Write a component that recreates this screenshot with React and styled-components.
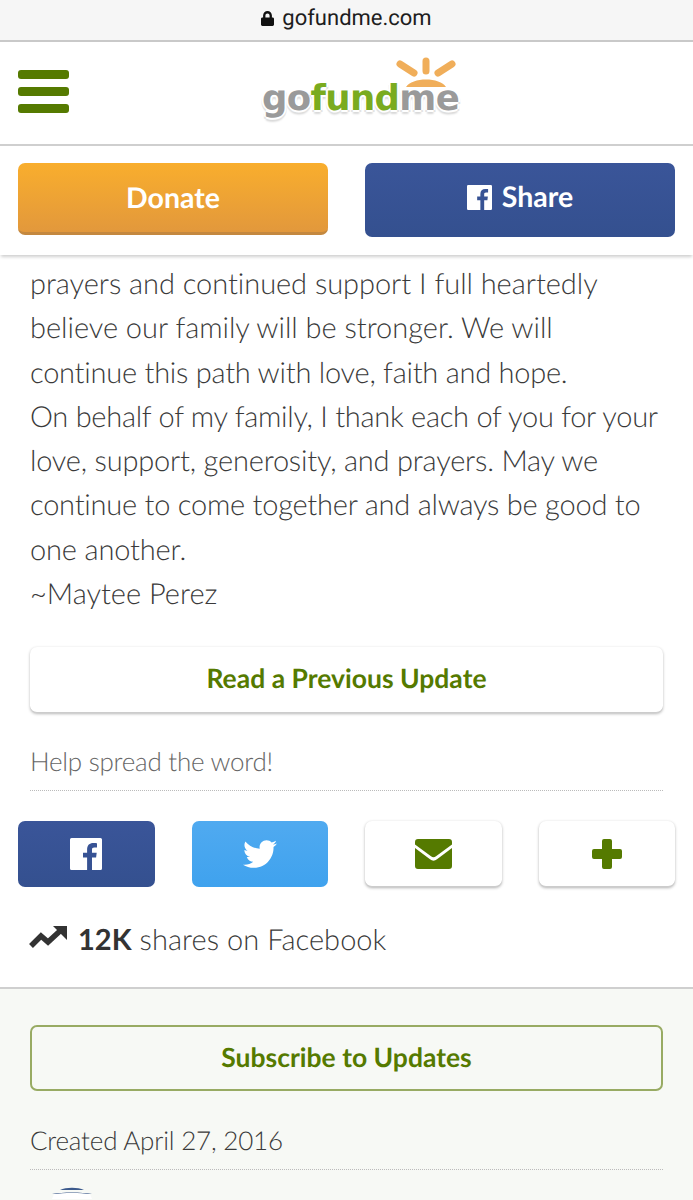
import React from "react";
import styled, { createGlobalStyle } from "styled-components";
import { FaTwitter, FaLock } from "react-icons/fa";

const Global = createGlobalStyle`
  html, body { margin: 0; padding: 0; background: #fff; }
  body { font-family: Lato, "Liberation Sans", sans-serif; overflow: hidden; text-rendering: geometricPrecision; }
  * { box-sizing: border-box; }
`;
const Page = styled.div`
  width: 693px; height: 1200px; overflow: hidden; display: flex; flex-direction: column; background: #fff;
`;
const AddressBar = styled.div`
  height: 42px; flex: none; background: #f6f6f6; border-bottom: 2px solid #c9c9c9; padding-bottom: 4px;
  display: flex; align-items: center; justify-content: center; gap: 8px;
  font-family: Roboto, "Liberation Sans", sans-serif; font-size: 22px; color: #1d1d1d;
  svg { width: 13px; height: 15px; color: #111; }
`;
const Header = styled.header`
  height: 104px; flex: none; border-bottom: 2px solid #cfcfcf; display: flex; align-items: center;
  padding: 0 18px; position: relative;
`;
const Burger = styled.div`
  width: 51px; display: flex; flex-direction: column; gap: 8px; margin-top: -3px;
  i { display: block; height: 9px; border-radius: 3px; background: #557a00; }
`;
const Logo = styled.div`
  position: absolute; left: 262px; top: 14px; width: 204px; height: 68px;
  svg { position: absolute; left: 126px; top: 0; width: 76px; height: 36px; }
`;
const LogoWord = styled.div`
  position: absolute; left: 0; top: 20px; font-family: "DejaVu Sans", sans-serif; font-weight: 700; font-size: 35.5px;
  line-height: 46px; letter-spacing: -0.65px; color: #9a9a9a; white-space: nowrap;
  text-shadow: 2px 0 #fff, -2px 0 #fff, 0 2px #fff, 0 -2px #fff, 2px 2px #e4e4e4, -2px 2px #e4e4e4, 0 4px 2px #d8d8d8;
  b { color: #7aab1f; font-weight: 700; }
`;
const ActionBar = styled.div`
  height: 109px; flex: none; padding: 17px 18px 0; display: grid; grid-template-columns: 310px 310px; column-gap: 37px;
  align-items: start; box-shadow: 0 3px 3px -1px #d0d0d0; position: relative; background: #fff;
  clip-path: inset(0 0 -6px 0);
`;
const BigButton = styled.div`
  height: ${p => p.$h}px; padding-bottom: ${p => p.$pb}px; border-radius: 7px; display: flex; align-items: center; justify-content: center; gap: 10px;
  color: #fff; font-weight: 700; font-size: 28.5px;
  background: ${p => p.$bg}; border-bottom: ${p => p.$edge};
  svg { width: 25px; height: 25px; }
`;
const Article = styled.div`
  padding: 7px 30px 0; font-size: 29px; line-height: 44.3px; font-weight: 300; color: #3a3a3a; white-space: nowrap;
`;
const ArticleLine = styled.div`
  letter-spacing: ${p => p.$track}px;
`;
const ReadButton = styled.div`
  margin: 31px 30px 0; height: 66px; flex: none; border-radius: 7px; background: #fff; padding-bottom: 4px;
  box-shadow: 0 1px 3px rgba(0,0,0,.28); border-bottom: 1px solid #ccc;
  display: flex; align-items: center; justify-content: center;
  color: #557a00; font-weight: 700; font-size: 26.5px;
`;
const Help = styled.div`
  margin: 28px 30px 0; height: 50px; border-bottom: 1px dotted #bbb; font-weight: 300; font-size: 26px; line-height: 40px; color: #666;
  letter-spacing: -0.25px;
`;
const ShareRow = styled.div`
  margin: 30px 18px 0; display: grid; grid-template-columns: repeat(4, 136.6px); column-gap: 37px;
`;
const ShareButton = styled.div`
  height: 66px; border-radius: 7px; display: flex; align-items: center; justify-content: center;
  background: ${p => p.$bg}; color: ${p => p.$fg};
  box-shadow: ${p => p.$plain ? "0 1px 3px rgba(0,0,0,.3)" : "none"};
  border-bottom: ${p => p.$plain ? "1px solid #ccc" : "none"};
  svg { width: ${p => p.$w}px; height: ${p => p.$h}px; }
`;
const Stat = styled.div`
  margin: 30px 30px 0; display: flex; align-items: center; gap: 11px; height: 44px;
  font-size: 29px; font-weight: 300; color: #3a3a3a; letter-spacing: 0.05px;
  b { font-weight: 700; color: #333; }
  svg { width: 38px; height: 23px; margin-top: -4px; margin-left: -1px; }
`;
const Footer = styled.div`
  margin-top: 26px; flex: 1; background: #f7f9f5; border-top: 2px solid #cfcfcf; padding: 36px 30px 0; position: relative;
`;
const Subscribe = styled.div`
  height: 66px; border: 2px solid #98ab63; border-radius: 7px; display: flex; align-items: center; justify-content: center;
  padding-bottom: 2px; color: #557a00; font-weight: 700; font-size: 26.5px;
`;
const Created = styled.div`
  margin-top: 26px; height: 53px; border-bottom: 1px dotted #bbb; font-size: 26px; font-weight: 300; line-height: 46px; color: #3a3a3a;
  letter-spacing: -0.2px;
`;
const Avatar = styled.svg`
  display: block; margin: 17px 0 0 22px; width: 40px; height: 12px;
`;

const FbIcon = () => (
  <svg viewBox="0 0 32 32">
    <path fill="#fff" d="M1.5 0h29A1.5 1.5 0 0 1 32 1.5v29a1.5 1.5 0 0 1-1.500 1.500H22V19.600h4.100l.6-4.800H22v-3c0-1.400.4-2.300 2.400-2.300H27V5.200c-.5-.1-2-.2-3.700-.2-3.700 0-6.200 2.200-6.200 6.400v3.400H13v4.800h4.100V32H1.500A1.500 1.500 0 0 1 0 30.500v-29A1.500 1.500 0 0 1 1.500 0z" />
  </svg>
);

const lines = [
  ["prayers and continued support I full heartedly", -0.04],
  ["believe our family will be stronger. We will", -0.02],
  ["continue this path with love, faith and hope.", -0.24],
  ["On behalf of my family, I thank each of you for your", -0.27],
  ["love, support, generosity, and prayers. May we", -0.2],
  ["continue to come together and always be good to", -0.23],
  ["one another.", -0.15],
  ["~Maytee Perez", 0],
];

export default function App() {
  return (
    <Page>
      <Global />
      <AddressBar><FaLock /><span>gofundme.com</span></AddressBar>
      <Header>
        <Burger><i /><i /><i /></Burger>
        <Logo>
          <svg viewBox="0 0 76 36" fill="none">
            <g stroke="#fff" strokeWidth="12" strokeLinecap="round">
              <path d="M12 8 L26 17 M38 5 V15 M64 8 L50 17" />
            </g>
            <g stroke="#f0ae5a" strokeWidth="7" strokeLinecap="round">
              <path d="M12 8 L26 17 M38 5 V15 M64 8 L50 17" />
            </g>
            <path d="M18 31 C24 21 52 21 58 31 Z" fill="#f0ae5a" />
          </svg>
          <LogoWord>go<b>fund</b>me</LogoWord>
        </Logo>
      </Header>
      <ActionBar>
        <BigButton $h={72} $pb={0} $bg="linear-gradient(#f9ae2d,#e2983c)" $edge="3px solid #c4883f">Donate</BigButton>
        <BigButton $h={74} $pb={6} $bg="linear-gradient(#3a5599,#34508f)" $edge="none"><FbIcon />Share</BigButton>
      </ActionBar>
      <Article>
        {lines.map(([text, track]) => <ArticleLine key={text} $track={track}>{text}</ArticleLine>)}
      </Article>
      <ReadButton>Read a Previous Update</ReadButton>
      <Help>Help spread the word!</Help>
      <ShareRow>
        <ShareButton $bg="linear-gradient(#3a5599,#34508f)" $fg="#fff" $w={32} $h={32}><FbIcon /></ShareButton>
        <ShareButton $bg="linear-gradient(#50aaf0,#3fa2ee)" $fg="#fff" $w={34} $h={34}><FaTwitter /></ShareButton>
        <ShareButton $bg="#fff" $fg="#557a00" $w={37} $h={30} $plain>
          <svg viewBox="0 0 37 30"><path fill="currentColor" d="M3 0h31a3 3 0 0 1 3 3v2.500L21 17.300a4 4 0 0 1-5 0L0 5.500V3a3 3 0 0 1 3-3z" /><path fill="currentColor" d="M0 9l15 11.200a5.500 5.500 0 0 0 7 0L37 9v18a3 3 0 0 1-3 3H3a3 3 0 0 1-3-3z" /></svg>
        </ShareButton>
        <ShareButton $bg="#fff" $fg="#557a00" $w={30} $h={30} $plain>
          <svg viewBox="0 0 30 30"><path fill="currentColor" d="M10 2a2 2 0 0 1 2-2h6a2 2 0 0 1 2 2v8h8a2 2 0 0 1 2 2v6a2 2 0 0 1-2 2h-8v8a2 2 0 0 1-2 2h-6a2 2 0 0 1-2-2v-8H2a2 2 0 0 1-2-2v-6a2 2 0 0 1 2-2h8z" /></svg>
        </ShareButton>
      </ShareRow>
      <Stat>
        <svg viewBox="0 0 38 23" fill="none"><path d="M2 20 L12 10 L19 16 L31 5" stroke="#333" strokeWidth="5.500" /><path d="M24 0 H38 V14 Z" fill="#333" /></svg>
        <span><b>12K</b> shares on Facebook</span>
      </Stat>
      <Footer>
        <Subscribe>Subscribe to Updates</Subscribe>
        <Created>Created April 27, 2016</Created>
        <Avatar viewBox="0 0 40 12" fill="none"><path d="M8 3 C14 0 26 0 32 3 Z" fill="#3c5a8c" /><path d="M0 7 C10 5 30 5 40 7 Z" fill="#3c5a8c" /><path d="M2 7 C12 5.500 28 5.500 38 7 L40 12 H0 Z" fill="#fff" /></Avatar>
      </Footer>
    </Page>
  );
}
